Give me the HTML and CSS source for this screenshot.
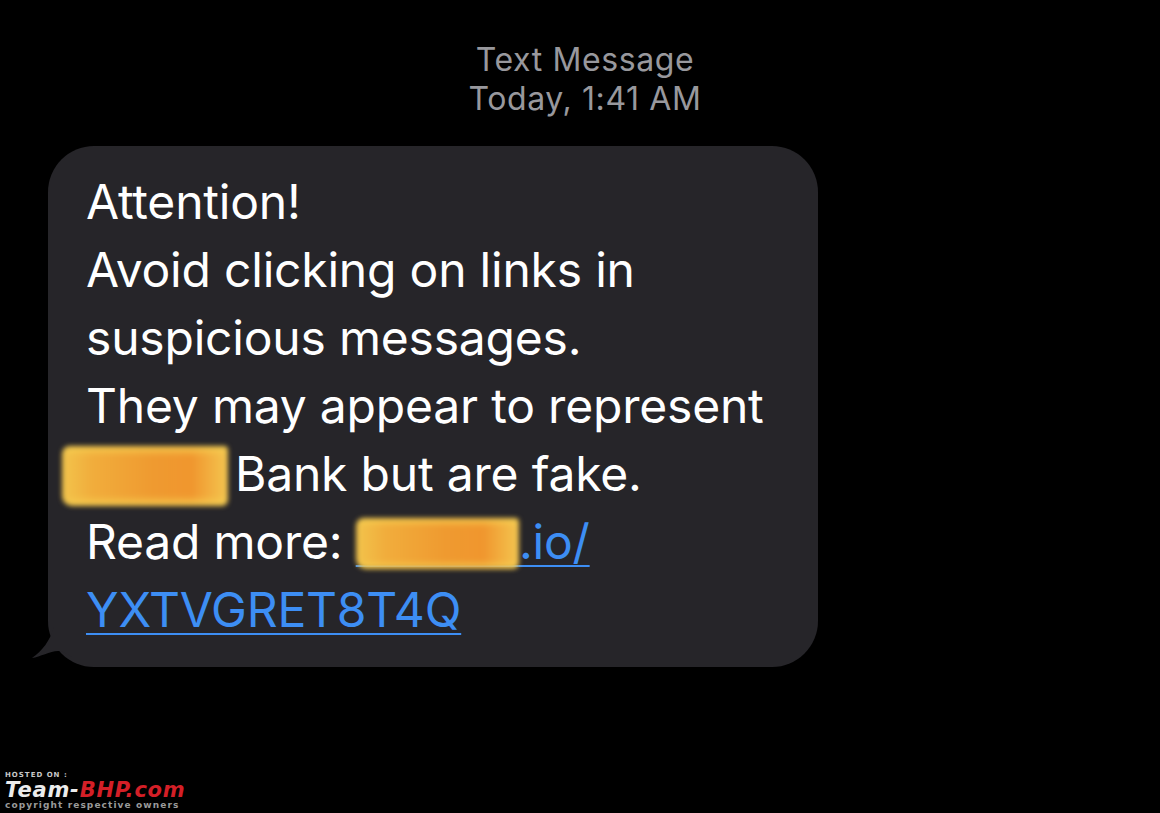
FILE: index.html
```html
<!DOCTYPE html>
<html lang="en">
<head>
    <meta charset="UTF-8">
    <title>Text Message</title>
    <link rel="stylesheet" href="styles.css">
</head>
<body>
    <div class="thread">
        <div class="thread-header">
            <div>Text Message</div>
            <div>Today, 1:41 AM</div>
        </div>

        <div class="bubble">
            <p class="bubble-text">Attention!<br>Avoid clicking on links in<br>suspicious messages.<br>They may appear to represent<br><span class="redact redact-bank">xxxxxx</span>Bank but are fake.<br>Read more: <a class="link" href="#"><span class="redact redact-link">xxxxxx</span>.io/<br>YXTVGRET8T4Q</a></p>
            <svg class="tail" width="40" height="40" viewBox="0 0 40 40">
                <path d="M22 0 L40 0 L40 30 C34 26 30 24 26 24 C18 24 8 30 0 31 C10 24 18 14 22 0 Z" fill="#262529"/>
            </svg>
        </div>
    </div>

    <div class="watermark">
        <div class="wm-hosted">HOSTED ON :</div>
        <div class="wm-brand">Team-<span class="wm-red">BHP.com</span></div>
        <div class="wm-copy">copyright respective owners</div>
    </div>
</body>
</html>
```

FILE: styles.css
```css
body {
    margin: 0;
    background: #000;
    font-family: Inter, 'Noto Sans', sans-serif;
    width: 1160px;
    height: 813px;
    overflow: hidden;
    position: relative;
}

.thread {
    padding-top: 40px;
}

.thread-header {
    text-align: center;
    color: #98989d;
    font-size: 32px;
    line-height: 39px;
    letter-spacing: 0.6px;
    padding-left: 10px;
}

.bubble {
    position: relative;
    margin: 28px 0 0 48px;
    width: 770px;
    background: #262529;
    border-radius: 46px;
    padding: 22px 0 23px 38px;
    box-sizing: border-box;
}

.bubble-text {
    margin: 0;
    color: #fff;
    font-size: 48px;
    line-height: 68px;
    letter-spacing: -0.2px;
}

.link {
    color: #3d8ef4;
    text-decoration: underline;
    text-decoration-thickness: 2px;
    text-underline-offset: 6px;
}

.redact {
    position: relative;
    color: transparent;
}

.redact::before {
    content: "";
    position: absolute;
    left: 0;
    right: 0;
    top: 6px;
    bottom: 2px;
    border-radius: 8px 4px 6px 10px;
    background:
        linear-gradient(180deg, rgba(246, 206, 80, 0.9) 0%, rgba(246, 206, 80, 0) 18%, rgba(246, 206, 80, 0) 82%, rgba(246, 206, 80, 0.9) 100%),
        linear-gradient(90deg, #f2c44c 0%, #f1ad3c 18%, #ef9a30 55%, #f0962e 78%, #f4c650 100%);
    filter: blur(2.5px);
}

.redact-bank {
    display: inline-block;
    width: 166px;
    margin-left: -24px;
    margin-right: 7px;
    letter-spacing: 0;
}

.redact-link {
    letter-spacing: 1px;
}

.tail {
    position: absolute;
    left: -16px;
    bottom: 0;
}

.watermark {
    position: absolute;
    left: 5px;
    bottom: 3px;
    font-family: 'DejaVu Sans', sans-serif;
    line-height: 1;
}

.wm-hosted {
    color: #c8c8c8;
    font-size: 7px;
    font-weight: bold;
    letter-spacing: 1px;
}

.wm-brand {
    color: #ececec;
    font-size: 21px;
    font-weight: bold;
    font-style: italic;
    letter-spacing: 0.8px;
    margin-top: 1px;
}

.wm-red {
    color: #d41f27;
}

.wm-copy {
    color: #9a9a9a;
    font-size: 9px;
    font-weight: bold;
    letter-spacing: 1.1px;
}
```
